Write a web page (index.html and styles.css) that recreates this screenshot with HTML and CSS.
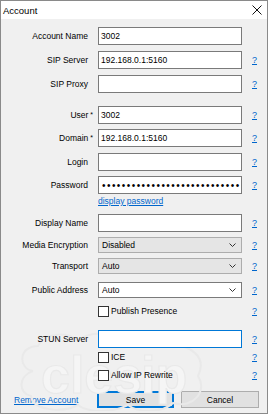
FILE: index.html
```html
<!DOCTYPE html>
<html>
<head>
<meta charset="utf-8">
<link rel="stylesheet" href="styles.css">
</head>
<body>
<div class="window">
  <div class="titlebar">
    <span class="title">Account</span>
    <svg class="close" width="10" height="10" viewBox="0 0 10 10"><path d="M0.5 0.5 L9.5 9.5 M9.5 0.5 L0.5 9.5" stroke="#111" stroke-width="1" fill="none"/></svg>
  </div>
  <div class="content">
    <svg class="watermark" width="200" height="80" viewBox="0 0 200 80">
      <path d="M20 40 C5 38 5 15 25 15 C30 2 55 0 65 10 C75 0 100 0 110 10 C120 0 150 2 155 15 C175 12 195 25 185 45 C195 60 180 78 160 72 C150 82 125 82 115 74 C100 82 75 82 65 74 C50 82 20 80 18 65 C5 62 5 45 20 40 Z" fill="none" stroke="#e9e9e9" stroke-width="2"/>
      <text x="28" y="62" class="wm-text">cles</text>
      <text x="128" y="62" class="wm-text">ip</text>
    </svg>

    <div class="row h18 first">
      <span class="lbl">Account Name</span>
      <div class="field">3002</div>
      <span></span>
    </div>
    <div class="row h18 mt6">
      <span class="lbl">SIP Server</span>
      <div class="field">192.168.0.1:5160</div>
      <a class="help">?</a>
    </div>
    <div class="row h18 mt6">
      <span class="lbl">SIP Proxy</span>
      <div class="field"></div>
      <a class="help">?</a>
    </div>
    <div class="row h18 mt13">
      <span class="lbl">User<span class="req"> *</span></span>
      <div class="field">3002</div>
      <a class="help">?</a>
    </div>
    <div class="row h18 mt5">
      <span class="lbl">Domain<span class="req"> *</span></span>
      <div class="field">192.168.0.1:5160</div>
      <a class="help">?</a>
    </div>
    <div class="row h18 mt6">
      <span class="lbl">Login</span>
      <div class="field"></div>
      <a class="help">?</a>
    </div>
    <div class="row h18 mt5">
      <span class="lbl">Password</span>
      <div class="field"><span class="dots">••••••••••••••••••••••••••••</span><span class="caret"></span></div>
      <a class="help">?</a>
    </div>
    <div class="row h12 mt1">
      <span></span>
      <a class="link">display password</a>
      <span></span>
    </div>
    <div class="row h18 mt7">
      <span class="lbl">Display Name</span>
      <div class="field"></div>
      <a class="help">?</a>
    </div>
    <div class="row h16 mt5">
      <span class="lbl">Media Encryption</span>
      <div class="select">Disabled<svg class="chev" width="7" height="4" viewBox="0 0 7 4"><path d="M0.5 0.5 L3.5 3.5 L6.5 0.5" stroke="#333" fill="none"/></svg></div>
      <a class="help">?</a>
    </div>
    <div class="row h16 mt5">
      <span class="lbl">Transport</span>
      <div class="select">Auto<svg class="chev" width="7" height="4" viewBox="0 0 7 4"><path d="M0.5 0.5 L3.5 3.5 L6.5 0.5" stroke="#333" fill="none"/></svg></div>
      <a class="help">?</a>
    </div>
    <div class="row h16 mt8">
      <span class="lbl">Public Address</span>
      <div class="select combo">Auto<svg class="chev" width="7" height="4" viewBox="0 0 7 4"><path d="M0.5 0.5 L3.5 3.5 L6.5 0.5" stroke="#333" fill="none"/></svg></div>
      <a class="help">?</a>
    </div>
    <div class="row h16 mt5">
      <span></span>
      <div class="check"><span class="box"></span>Publish Presence</div>
      <a class="help">?</a>
    </div>
    <div class="row h18 mt11">
      <span class="lbl">STUN Server</span>
      <div class="field focus"></div>
      <a class="help">?</a>
    </div>
    <div class="row h16 mt1">
      <span></span>
      <div class="check"><span class="box"></span>ICE</div>
      <a class="help">?</a>
    </div>
    <div class="row h16 mt2">
      <span></span>
      <div class="check"><span class="box"></span>Allow IP Rewrite</div>
      <a class="help">?</a>
    </div>
    <div class="actions">
      <a class="link remove">Remove Account</a>
      <span class="spacer"></span>
      <button class="btn default">Save</button>
      <button class="btn">Cancel</button>
    </div>
  </div>
</div>
</body>
</html>
```
FILE: styles.css
```css
* { box-sizing: border-box; }
body {
  margin: 0;
  font-family: "Liberation Sans", Arial, sans-serif;
  font-size: 8.5px;
  color: #000;
}
.window {
  width: 268px;
  height: 414px;
  border: 1px solid #8a8a8a;
  background: #f0f0f0;
  display: flex;
  flex-direction: column;
}
.titlebar {
  height: 18px;
  background: #fff;
  display: flex;
  align-items: center;
  justify-content: space-between;
  padding: 0 5px 0 2px;
  flex: none;
}
.title { font-size: 9.5px; }
.close { display: block; }
.content {
  position: relative;
  flex: 1;
  padding-top: 8px;
}
.watermark {
  position: absolute;
  left: 12px;
  top: 312px;
  pointer-events: none;
}
.wm-text {
  font-family: "Liberation Sans", Arial, sans-serif;
  font-weight: bold;
  font-size: 52px;
  fill: #f5f5f5;
  stroke: #e9e9e9;
  stroke-width: 1.2;
}
.row {
  position: relative;
  display: grid;
  grid-template-columns: 87px 144px 1fr;
  column-gap: 10px;
  align-items: center;
}
.h18 { height: 18px; }
.h16 { height: 16px; }
.h12 { height: 12px; }
.mt1 { margin-top: 1px; }
.mt2 { margin-top: 2px; }
.mt5 { margin-top: 5px; }
.mt6 { margin-top: 6px; }
.mt7 { margin-top: 7px; }
.mt8 { margin-top: 8px; }
.mt11 { margin-top: 11px; }
.mt13 { margin-top: 13px; }
.lbl {
  text-align: right;
  white-space: nowrap;
}
.req { margin-right: -5px; font-size: 7px; vertical-align: 1px; }
.field {
  height: 18px;
  border: 1px solid #7a7a7a;
  background: #fff;
  padding-left: 2px;
  display: flex;
  align-items: center;
  white-space: nowrap;
  overflow: hidden;
}
.field.focus { border-color: #0078d7; }
.dots {
  font-size: 10px;
  letter-spacing: 1.45px;
  margin-left: 1px;
}
.caret {
  width: 2px;
  height: 2px;
  background: #e08a2a;
}
.select {
  height: 16px;
  border: 1px solid #adadad;
  background: #e5e5e5;
  padding-left: 3px;
  padding-right: 5px;
  display: flex;
  align-items: center;
  justify-content: space-between;
}
.select.combo {
  background: #fff;
  border-color: #7a7a7a;
}
.chev { display: block; }
.check {
  display: flex;
  align-items: center;
  white-space: nowrap;
}
.box {
  width: 11px;
  height: 11px;
  border: 1px solid #333;
  background: #fff;
  margin-right: 2px;
  flex: none;
}
.help {
  color: #0066cc;
  text-decoration: underline;
  font-size: 9px;
  cursor: pointer;
}
.link {
  color: #0066cc;
  text-decoration: underline;
  cursor: pointer;
  white-space: nowrap;
}
.actions {
  margin-top: 8px;
  height: 17px;
  display: flex;
  align-items: center;
  padding-left: 13px;
  padding-right: 8px;
}
.spacer { flex: 1; }
.btn {
  font-family: "Liberation Sans", Arial, sans-serif;
  font-size: 8.5px;
  height: 17px;
  width: 78px;
  border: 1px solid #adadad;
  background: #e1e1e1;
  padding: 0;
  margin: 0;
  color: #000;
}
.btn.default {
  width: 77px;
  border: 2px solid #0078d7;
  margin-right: 7px;
}
```
